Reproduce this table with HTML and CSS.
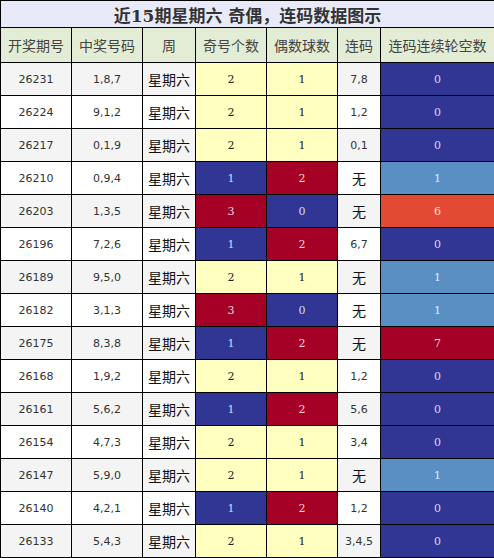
FILE: index.html
```html
<!DOCTYPE html>
<html lang="zh">
<head>
  <meta charset="UTF-8">
  <title>近15期星期六 奇偶，连码数据图示</title>
  <link rel="stylesheet" href="styles.css">
</head>
<body>
  <table class="chart">
    <colgroup>
      <col class="c-issue">
      <col class="c-nums">
      <col class="c-week">
      <col class="c-odd">
      <col class="c-even">
      <col class="c-link">
      <col class="c-gap">
    </colgroup>
    <tr class="title-row"><th colspan="7">近15期星期六 奇偶，连码数据图示</th></tr>
    <tr class="head-row">
      <th>开奖期号</th><th>中奖号码</th><th>周</th><th>奇号个数</th><th>偶数球数</th><th>连码</th><th>连码连续轮空数</th>
    </tr>
    <tr class="gray"><td class="num">26231</td><td class="num">1,8,7</td><td class="wk">星期六</td><td class="y">2</td><td class="y">1</td><td class="num">7,8</td><td class="b">0</td></tr>
    <tr><td class="num">26224</td><td class="num">9,1,2</td><td class="wk">星期六</td><td class="y">2</td><td class="y">1</td><td class="num">1,2</td><td class="b">0</td></tr>
    <tr class="gray"><td class="num">26217</td><td class="num">0,1,9</td><td class="wk">星期六</td><td class="y">2</td><td class="y">1</td><td class="num">0,1</td><td class="b">0</td></tr>
    <tr><td class="num">26210</td><td class="num">0,9,4</td><td class="wk">星期六</td><td class="b">1</td><td class="r">2</td><td class="wk">无</td><td class="lb">1</td></tr>
    <tr class="gray"><td class="num">26203</td><td class="num">1,3,5</td><td class="wk">星期六</td><td class="r">3</td><td class="b">0</td><td class="wk">无</td><td class="o">6</td></tr>
    <tr><td class="num">26196</td><td class="num">7,2,6</td><td class="wk">星期六</td><td class="b">1</td><td class="r">2</td><td class="num">6,7</td><td class="b">0</td></tr>
    <tr class="gray"><td class="num">26189</td><td class="num">9,5,0</td><td class="wk">星期六</td><td class="y">2</td><td class="y">1</td><td class="wk">无</td><td class="lb">1</td></tr>
    <tr><td class="num">26182</td><td class="num">3,1,3</td><td class="wk">星期六</td><td class="r">3</td><td class="b">0</td><td class="wk">无</td><td class="lb">1</td></tr>
    <tr class="gray"><td class="num">26175</td><td class="num">8,3,8</td><td class="wk">星期六</td><td class="b">1</td><td class="r">2</td><td class="wk">无</td><td class="r">7</td></tr>
    <tr><td class="num">26168</td><td class="num">1,9,2</td><td class="wk">星期六</td><td class="y">2</td><td class="y">1</td><td class="num">1,2</td><td class="b">0</td></tr>
    <tr class="gray"><td class="num">26161</td><td class="num">5,6,2</td><td class="wk">星期六</td><td class="b">1</td><td class="r">2</td><td class="num">5,6</td><td class="b">0</td></tr>
    <tr><td class="num">26154</td><td class="num">4,7,3</td><td class="wk">星期六</td><td class="y">2</td><td class="y">1</td><td class="num">3,4</td><td class="b">0</td></tr>
    <tr class="gray"><td class="num">26147</td><td class="num">5,9,0</td><td class="wk">星期六</td><td class="y">2</td><td class="y">1</td><td class="wk">无</td><td class="lb">1</td></tr>
    <tr><td class="num">26140</td><td class="num">4,2,1</td><td class="wk">星期六</td><td class="b">1</td><td class="r">2</td><td class="num">1,2</td><td class="b">0</td></tr>
    <tr class="gray"><td class="num">26133</td><td class="num">5,4,3</td><td class="wk">星期六</td><td class="y">2</td><td class="y">1</td><td class="num">3,4,5</td><td class="b">0</td></tr>
  </table>
</body>
</html>
```

FILE: styles.css
```css
body {
  margin: 0;
  background: #fff;
  font-family: "DejaVu Sans", "Noto Sans CJK SC", sans-serif;
}

.chart {
  width: 494px;
  border-collapse: collapse;
  table-layout: fixed;
  text-align: center;
}

.chart th,
.chart td {
  border: 1px solid #000;
  padding: 0;
}

.c-issue { width: 71px; }
.c-nums { width: 71px; }
.c-week { width: 53px; }
.c-odd { width: 71px; }
.c-even { width: 71px; }
.c-link { width: 43px; }
.c-gap { width: 114px; }

.title-row th {
  height: 26px;
  background: #e8eafa;
  color: #333;
  font-size: 17px;
  font-weight: bold;
  font-family: "DejaVu Serif", "Noto Sans CJK SC", serif;
}

.head-row th {
  height: 34px;
  background: #e3ecd4;
  color: #444;
  font-weight: normal;
  font-size: 14px;
  font-family: "Noto Sans CJK SC", sans-serif;
}

.chart td {
  height: 32px;
  font-size: 11px;
  background: #fff;
  color: #222;
}

.chart tr.gray td {
  background: #f4f4f4;
}

.chart td.num {
  font-family: "DejaVu Sans", sans-serif;
  font-size: 11px;
  color: #333;
}

.chart td.wk {
  font-family: "Noto Sans CJK SC", sans-serif;
  font-size: 14px;
  color: #111;
}

.chart td.y,
.chart td.b,
.chart td.r,
.chart td.lb,
.chart td.o {
  font-family: "DejaVu Serif", serif;
  font-size: 11px;
}

.chart tr td.y { background: #ffffc0; color: #222; }
.chart tr td.b { background: #313695; color: #d8d8ee; }
.chart tr td.r { background: #a50026; color: #eed8dc; }
.chart tr td.lb { background: #5a8fc3; color: #e0ecf8; }
.chart tr td.o { background: #e34a33; color: #fbe2dc; }
```
